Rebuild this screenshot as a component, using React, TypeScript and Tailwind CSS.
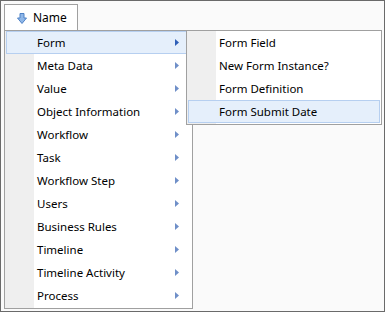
const mainItems = [
  'Form',
  'Meta Data',
  'Value',
  'Object Information',
  'Workflow',
  'Task',
  'Workflow Step',
  'Users',
  'Business Rules',
  'Timeline',
  'Timeline Activity',
  'Process',
]

const subItems = ['Form Field', 'New Form Instance?', 'Form Definition', 'Form Submit Date']

function SubArrow({ active }: { active?: boolean }) {
  return (
    <svg width="4" height="7" viewBox="0 0 4 7" className="shrink-0">
      <path d="M0 0 L4 3.5 L0 7 Z" fill={active ? '#2f5fb8' : '#6f8fc8'} />
    </svg>
  )
}

function DownArrow() {
  return (
    <svg width="10" height="11" viewBox="0 0 10 11">
      <path
        d="M3 0.5 H7 V5 H9.5 L5 10.5 L0.5 5 H3 Z"
        fill="#8fb7e8"
        stroke="#4f82c6"
        strokeWidth="1"
        strokeLinejoin="round"
      />
    </svg>
  )
}

function MenuItem({ label, active, hasSub }: { label: string; active?: boolean; hasSub?: boolean }) {
  return (
    <div
      className={
        'flex h-[23px] items-center pl-[30px] pr-[11px] border ' +
        (active ? 'bg-[#e5effb] border-[#b6cff0]' : 'border-transparent')
      }
    >
      <span className="flex-1 text-black">{label}</span>
      {hasSub && <SubArrow active={active} />}
    </div>
  )
}

export default function App() {
  return (
    <div
      className="relative w-[385px] h-[312px] border border-[#6a6a6a] bg-[#fafafa] text-[11.5px] leading-none"
      style={{ fontFamily: '"Noto Sans", "Open Sans", sans-serif' }}
    >
      {/* column header */}
      <div className="absolute left-[3px] top-[3px] w-[74px] h-[27px] border-l border-t border-r border-[#a0a0a0] bg-white flex items-center gap-[6px] pl-[12px]">
        <DownArrow />
        <span className="text-black text-[12px]">Name</span>
      </div>

      {/* main menu */}
      <div className="absolute left-[3px] top-[29px] w-[189px] h-[279px] border border-[#a0a0a0] px-px bg-[linear-gradient(to_right,#efefef_29px,#ffffff_29px)]">
        {mainItems.map((item, i) => (
          <MenuItem key={item} label={item} active={i === 0} hasSub />
        ))}
      </div>

      {/* sub menu */}
      <div className="absolute left-[185px] top-[29px] w-[196px] h-[95px] border border-[#a0a0a0] px-px bg-[linear-gradient(to_right,#efefef_29px,#ffffff_29px)]">
        {subItems.map((item, i) => (
          <MenuItem key={item} label={item} active={i === 3} />
        ))}
      </div>
    </div>
  )
}
